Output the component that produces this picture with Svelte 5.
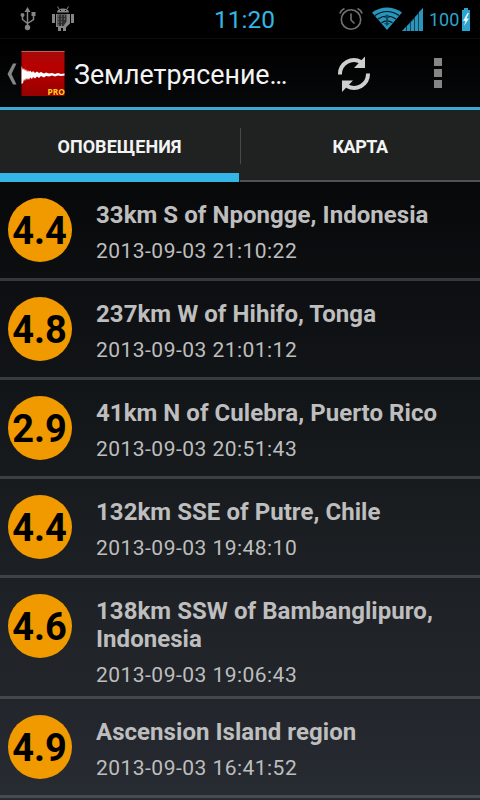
<script>
    const quakes = [
        { magnitude: '4.4', place: '33km S of Npongge, Indonesia', time: '2013-09-03 21:10:22' },
        { magnitude: '4.8', place: '237km W of Hihifo, Tonga', time: '2013-09-03 21:01:12' },
        { magnitude: '2.9', place: '41km N of Culebra, Puerto Rico', time: '2013-09-03 20:51:43' },
        { magnitude: '4.4', place: '132km SSE of Putre, Chile', time: '2013-09-03 19:48:10' },
        { magnitude: '4.6', place: '138km SSW of Bambanglipuro, Indonesia', time: '2013-09-03 19:06:43' },
        { magnitude: '4.9', place: 'Ascension Island region', time: '2013-09-03 16:41:52' },
    ];

    const tabs = ['Оповещения', 'Карта'];
    let active = $state(0);
</script>

<div class="screen">
    <div class="status">
        <svg class="usb" width="18" height="26" viewBox="0 0 18 26" fill="none" stroke="#858585" stroke-width="1.5">
            <path d="M8.500 3v18M3.500 9v4.500l5 4M14.500 8v5.500l-6 4" />
            <path d="M8.500 1l3 5h-6z" fill="#858585" stroke="none" />
            <circle cx="3.500" cy="9" r="2" fill="#858585" stroke="none" />
            <path d="M12.500 6h4v4h-4z" fill="#858585" stroke="none" />
            <circle cx="8.500" cy="21.500" r="2.700" fill="#858585" stroke="none" />
        </svg>
        <svg class="droid" width="24" height="26" viewBox="0 0 24 26" fill="#858585">
            <path d="M6 6.500C6 1 18 1 18 6.500z" />
            <path d="M8 3L6.500 .5M16 3L17.500 .5" stroke="#858585" />
            <path d="M1 8h3v9H1zM20 8h3v9h-3zM5 8h14v9.500l-4 4V25h-3v-3h-2v3H7v-4H5z" />
            <path d="M6.500 8.500h9v7l-3 4.500h-6z" fill="#303030" />
            <path d="M7 10h9M7 13h8M7 16h6M7 19h5" stroke="#929292" stroke-dasharray="1 2" />
            <path d="M9 4.500h1M14 4.500h1" stroke="#000" />
        </svg>
        <span class="clock">11:20</span>
        <svg class="alarm" width="24" height="24" viewBox="0 0 24 24" fill="none" stroke="#727272" stroke-width="1.600">
            <circle cx="12" cy="12.500" r="9.700" />
            <path d="M12 6.500V13l3.500 3.500M.8 6.500Q2 3 5.500 1.500M23.200 6.500Q22 3 18.500 1.500" />
        </svg>
        <svg class="wifi" width="30" height="23" viewBox="0 0 30 23">
            <path d="M0 5.500Q15-4.500 30 5.500L15 23z" fill="#2a95bb" />
            <path d="M3 8.500q12-8 24 0M6 12q9-6 18 0M9.500 15.700q5.500-3.500 11 0" fill="none" stroke="#00141c" stroke-width="1.200" />
            <path d="M15 7l3 4h-2v5h2l-3 3-3-3h2v-5h-2z" fill="#104b60" />
        </svg>
        <svg class="signal" width="21" height="23" viewBox="0 0 21 23" fill="#2a95bb">
            <path d="M0 23l4-4v4zM5 18l3-3v8H5zM9 14l3-3v12H9zM13 9l3-3v17h-3zM17 4l4-4v23h-4z" />
            <path d="M0 23L21 0v23z" opacity=".45" />
        </svg>
        <span class="percent">100</span>
        <svg class="battery" width="8" height="23" viewBox="0 0 8 23">
            <path d="M2 0h4v2h2v21H0V2h2z" fill="#2fa3cf" />
            <path d="M5.500 5L1 13h2.500L2 18l5-7.500H4.500L7 5z" fill="#e4f5fb" />
        </svg>
    </div>

    <div class="bar">
        <svg class="back" width="10" height="22" viewBox="0 0 10 22">
            <path d="M6 .5h3.500L4.500 11l5 10.500H6L.5 11z" fill="#858585" />
        </svg>
        <svg class="logo" width="44" height="46" viewBox="0 0 44 46">
            <defs>
                <linearGradient id="red" x1="0" y1="0" x2="0" y2="1">
                    <stop offset="0" stop-color="#a60a0a" />
                    <stop offset=".35" stop-color="#b80000" />
                    <stop offset="1" stop-color="#980000" />
                </linearGradient>
            </defs>
            <path d="M.5 0h43v45H.5z" fill="url(#red)" />
            <path d="M.5 .5h43" stroke="#c45a5a" />
            <path d="M.5 15L2 19 3 17 4 20 5 18 6 21 7 19 8 21 9 19.500 11 21.500 12 20 14 22 16 20.500 18 22 20 21 23 22.500 25 21.500 28 22.500 31 22 34 23 37 22 40 23 43.500 22.500V24.500L40 25 37 24.500 34 25.500 31 24.500 28 25.500 25 25 23 26.500 20 25 18 27 16 25.500 14 27.500 12 26 11 28 9 26.500 8 29 7 27 6 29 5 27 4 30 3 28 2 32 .5 33z" fill="#fff" />
            <text x="26.500" y="43.500" textLength="17.500" lengthAdjust="spacingAndGlyphs">PRO</text>
        </svg>
        <h1>Землетрясение…</h1>
        <svg class="refresh" width="34" height="36" viewBox="0 0 34 36">
            <path d="M3 18.500A14 14 0 0 1 24 6M31 17.500A14 14 0 0 1 10 30" fill="none" stroke="#cfcfcf" stroke-width="4" />
            <path d="M28 .5v11.500H17zM5 36V24.500H16z" fill="#cfcfcf" />
        </svg>
        <svg class="more" width="8" height="30" viewBox="0 0 8 30" fill="#868686">
            <path d="M0 0h8v8H0zM0 11h8v8H0zM0 22h8v8H0z" />
        </svg>
    </div>

    <div class="tabs">
        {#each tabs as tab, i}
            <button class="tab" class:active={active === i} onclick={() => active = i}>{tab}</button>
        {/each}
    </div>

    <div class="list">
        {#each quakes as quake}
            <div class="quake">
                <div class="magnitude"><span>{quake.magnitude}</span></div>
                <div class="info">
                    <div class="place">{quake.place}</div>
                    <div class="time">{quake.time}</div>
                </div>
            </div>
        {/each}
    </div>
</div>

<style>
    :global(body) {
        margin: 0;
        background: #000;
    }

    .screen {
        display: flex;
        flex-direction: column;
        width: 480px;
        height: 800px;
        overflow: hidden;
        background: linear-gradient(#000 0, #07080a 180px, #131619 400px, #1f2327 620px, #272b32 800px);
        font-family: Roboto, sans-serif;
    }

    .status {
        display: flex;
        flex: none;
        align-items: center;
        box-sizing: border-box;
        height: 39px;
        padding-left: 19px;
        background: #000;
        border-bottom: 1px solid #0c0c0c;
        color: #33b5e5;
    }

    .droid { margin-left: 14px; }

    .clock {
        width: 61px;
        margin: 1px 0 0 139px;
        font-size: 24.5px;
    }

    .alarm { margin-left: 64px; }
    .wifi { margin: 0 0 1px 9px; }

    .percent {
        width: 30px;
        margin: 1px 0 0 6px;
        color: #2fa3cf;
        font-size: 18px;
    }

    .battery { margin-left: 3px; }

    .bar {
        display: flex;
        flex: none;
        align-items: center;
        box-sizing: border-box;
        height: 71px;
        padding-left: 7px;
        background: linear-gradient(#000, #07080a);
        border-bottom: 3px solid #3cabd4;
    }

    .back { margin-top: 1px; }

    .logo {
        margin: 1px 0 0 4px;
    }

    .logo text {
        fill: #ffd21c;
        font-family: "Open Sans", sans-serif;
        font-size: 9px;
        font-weight: bold;
    }

    h1 {
        width: 216px;
        margin: 3px 0 0 9px;
        color: #f3f3f3;
        font-size: 26.8px;
        font-weight: normal;
        line-height: 32px;
        white-space: nowrap;
    }

    .refresh { margin: 1px 0 0 47px; }
    .more { margin-left: 63px; }

    .tabs {
        display: grid;
        flex: none;
        grid-template-columns: 239px 240px;
        column-gap: 1px;
        height: 72px;
        background: #202222;
    }

    .tab {
        position: relative;
        padding: 3px 0 0;
        background: none;
        border: 0;
        border-bottom: 2px solid #515254;
        color: #f3f3f3;
        font: bold 18px/67px Roboto, sans-serif;
        letter-spacing: -0.5px;
        text-transform: uppercase;
    }

    .tab.active {
        padding-top: 10px;
        border-bottom: 9px solid #33b5e5;
        letter-spacing: 0.05px;
        line-height: 53px;
    }

    .tab + .tab::before {
        content: '';
        position: absolute;
        top: 18px;
        left: 0;
        width: 1px;
        height: 36px;
        background: #48494a;
    }

    .quake {
        display: flex;
        align-items: flex-start;
        min-height: 96px;
        border-bottom: 3px solid rgba(140, 144, 146, 0.32);
    }

    .magnitude {
        display: flex;
        flex: none;
        align-items: center;
        justify-content: center;
        box-sizing: border-box;
        width: 64px;
        height: 64px;
        margin: 16px 24px 0 8px;
        padding: 2px 1px 0 0;
        background: #f09a00;
        border-radius: 50%;
        color: #000;
        font-size: 38px;
        font-weight: bold;
    }

    .info {
        width: 368px;
        padding: 19px 0 8px;
        color: #bebebe;
    }

    .place {
        font-size: 24px;
        font-weight: bold;
        letter-spacing: 0.05px;
        line-height: 28px;
    }

    .time {
        margin-top: 9px;
        font-size: 21px;
        letter-spacing: 0.47px;
        line-height: 26px;
    }
</style>
